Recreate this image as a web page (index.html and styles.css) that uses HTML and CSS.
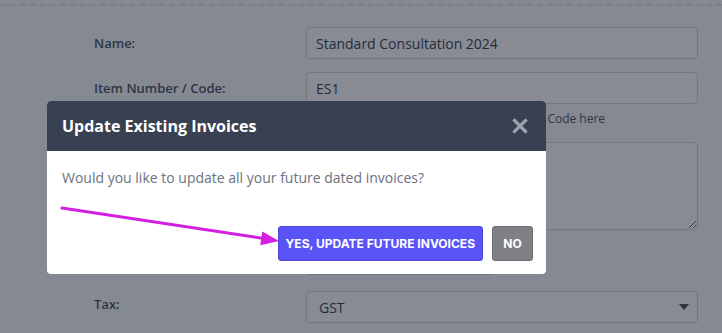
FILE: index.html
```html
<!DOCTYPE html>
<html lang="en">
<head>
    <meta charset="UTF-8">
    <meta name="viewport" content="width=device-width, initial-scale=1.0">
    <title>Edit Item</title>
    <link rel="stylesheet" href="styles.css">
</head>
<body>
    <div class="page">
        <div class="form">
            <div class="row">
                <label class="label">Name:</label>
                <div class="field"><input class="input" type="text" value="Standard Consultation 2024"></div>
            </div>
            <div class="row">
                <label class="label">Item Number / Code:</label>
                <div class="field">
                    <input class="input" type="text" value="ES1">
                    <div class="help">Enter your own internal Item Number(s) or Code here</div>
                </div>
            </div>
            <div class="row">
                <label class="label">Description:</label>
                <div class="field"><textarea class="input area"></textarea></div>
            </div>
            <div class="row">
                <label class="label">Price:</label>
                <div class="field"><input class="input short" type="text" value="150.00"></div>
            </div>
            <div class="row">
                <label class="label">Tax:</label>
                <div class="field">
                    <div class="select">
                        <span>GST</span>
                        <svg width="10" height="6" viewBox="0 0 10 6"><path d="M0 0h10L5 6z" fill="#4b5563"/></svg>
                    </div>
                </div>
            </div>
        </div>
    </div>

    <div class="overlay"></div>

    <div class="modal">
        <div class="modal-head">
            <h3>Update Existing Invoices</h3>
            <svg class="close" width="16" height="16" viewBox="0 0 16 16">
                <path d="M2.5 2.5l11 11M13.5 2.5l-11 11" stroke="#9ca3af" stroke-width="3.2" stroke-linecap="square"/>
            </svg>
        </div>
        <div class="modal-body">
            <p>Would you like to update all your future dated invoices?</p>
            <div class="actions">
                <button class="btn yes">Yes, update future invoices</button>
                <button class="btn no">No</button>
            </div>
        </div>
    </div>

    <svg class="arrow" width="240" height="50" viewBox="0 0 240 50">
        <line x1="2" y1="7" x2="204" y2="37.5" stroke="#d41fe3" stroke-width="3" stroke-linecap="round"/>
        <path d="M219 40L202.3 30.4L200.2 44.2z" fill="#d41fe3"/>
    </svg>
</body>
</html>
```

FILE: styles.css
```css
body {
    margin: 0;
    font-family: "Open Sans", sans-serif;
    background: #f9fafb;
    height: 333px;
    overflow: hidden;
}
.page {
    margin-top: 4px;
    border-top: 2px dashed #e5e7eb;
    padding: 21px 24px 0 94px;
}
.form {
    display: flex;
    flex-direction: column;
    gap: 13px;
}
.row {
    display: grid;
    grid-template-columns: 212px 392px;
    align-items: start;
}
.label {
    font-family: "Open Sans", sans-serif;
    font-weight: 600;
    font-size: 13px;
    color: #4b5563;
    padding-top: 7px;
}
.input {
    box-sizing: border-box;
    width: 100%;
    height: 32px;
    padding: 0 9px;
    border: 1px solid #d1d5db;
    border-radius: 4px;
    background: #fff;
    font-family: "Open Sans", sans-serif;
    font-size: 14px;
    color: #374151;
}
.area {
    height: 88px;
    display: block;
    resize: vertical;
}
.short {
    width: 190px;
}
.help {
    font-size: 12px;
    line-height: 16px;
    color: #4b5563;
    margin-top: 7px;
    margin-bottom: 2px;
}
.select {
    box-sizing: border-box;
    height: 32px;
    margin-top: 3px;
    padding: 0 8px 0 12px;
    border: 1px solid #d1d5db;
    border-radius: 4px;
    background: #fff;
    font-size: 14px;
    color: #374151;
    display: flex;
    align-items: center;
    justify-content: space-between;
}
.overlay {
    position: fixed;
    inset: 0;
    background: rgba(17, 24, 39, 0.5);
}
.modal {
    position: fixed;
    left: 47px;
    top: 101px;
    width: 499px;
    height: 173px;
    background: #fff;
    border-radius: 4px;
    overflow: hidden;
}
.modal-head {
    height: 50px;
    background: #374151;
    display: flex;
    align-items: center;
    justify-content: space-between;
    padding: 0 18px 0 15px;
}
.modal-head h3 {
    margin: 0;
    color: #fff;
    font-size: 16px;
    font-weight: bold;
}
.modal-body {
    padding: 17px 13px 13px 15px;
}
.modal-body p {
    margin: 0;
    font-size: 14px;
    color: #6b7280;
}
.actions {
    display: flex;
    justify-content: flex-end;
    gap: 9px;
    margin-top: 39px;
}
.btn {
    height: 35px;
    border-radius: 3px;
    font-family: Inter, sans-serif;
    font-weight: bold;
    font-size: 12px;
    text-transform: uppercase;
    color: #fff;
    padding: 0 7px;
}
.yes {
    background: #5a54f7;
    border: 1px solid #4a44d8;
}
.no {
    background: #7f7f86;
    border: 1px solid #6b6b72;
    width: 41px;
}
.arrow {
    position: fixed;
    left: 60px;
    top: 201px;
}
```
